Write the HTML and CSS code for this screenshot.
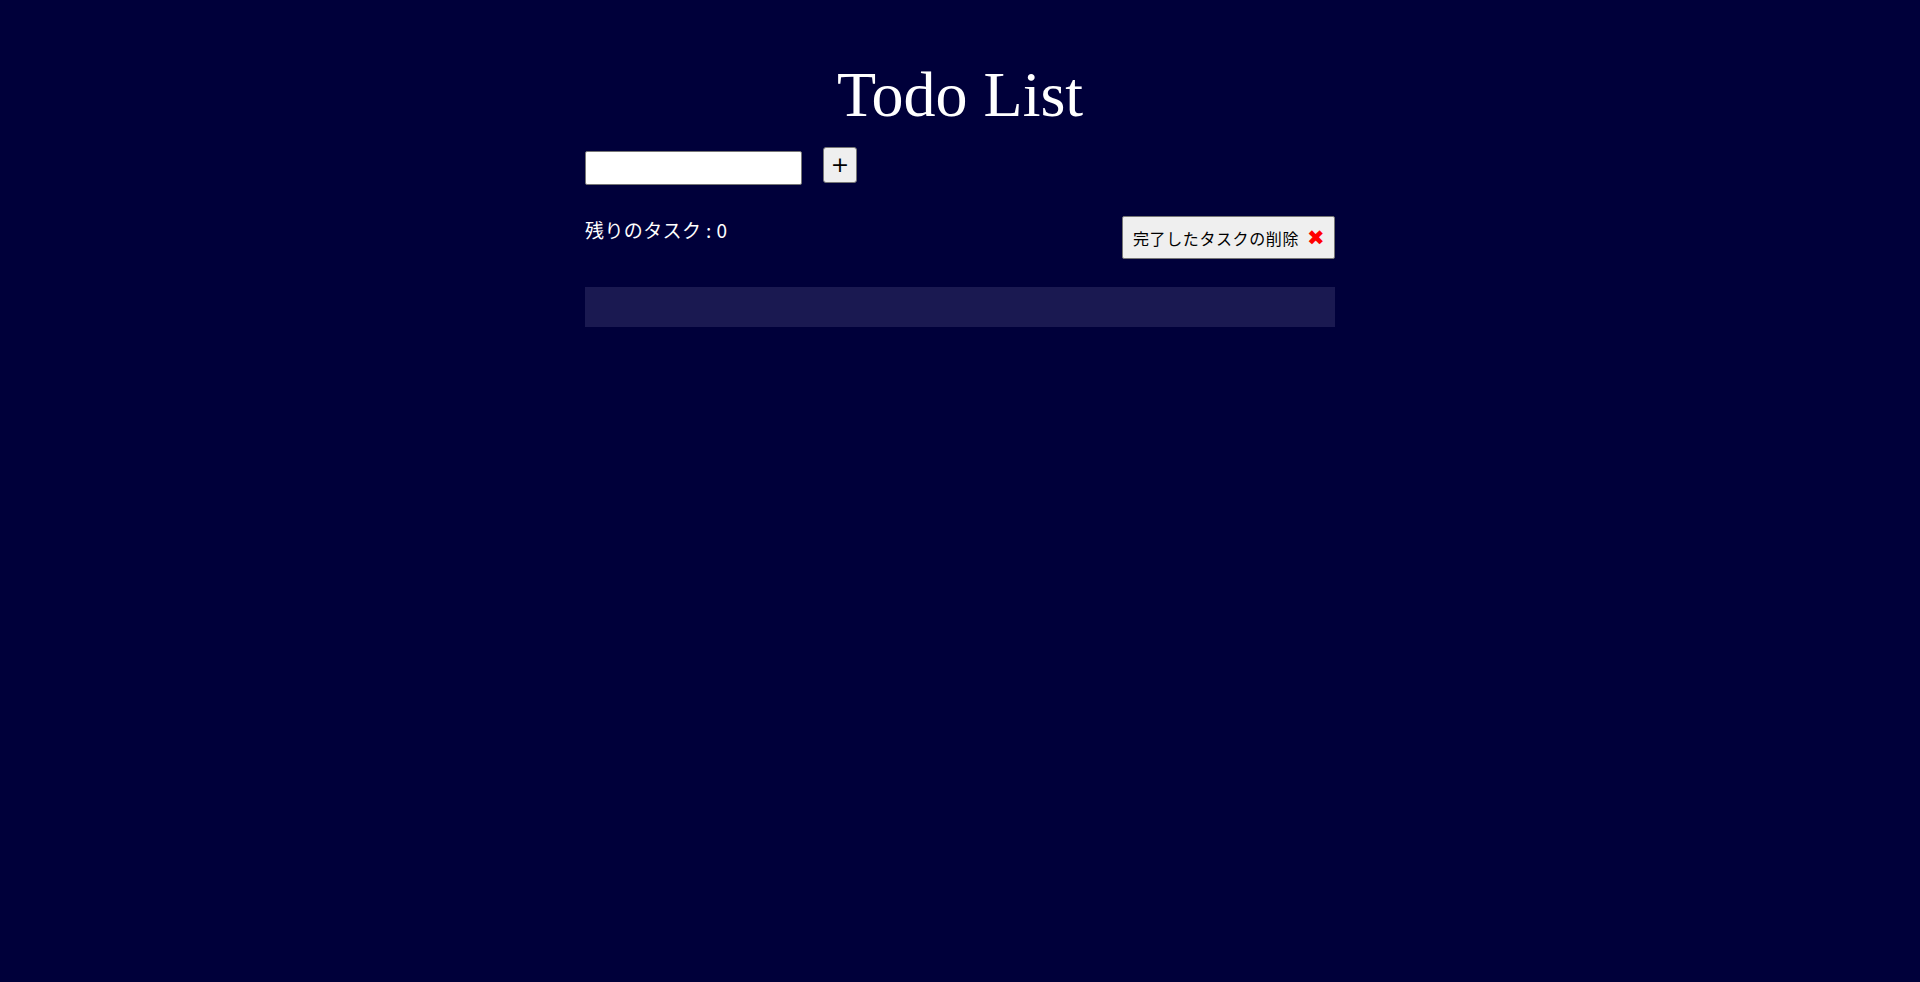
FILE: index.html
```html
<!DOCTYPE html>
<html lang="ja">
<head>
<meta charset="utf-8">
<title>Todo List</title>
<link rel="stylesheet" href="styles.css">
</head>
<body>
<main class="app">
  <h1 class="title">Todo List</h1>
  <form class="add-form">
    <input class="task-input" type="text">
    <button class="add-btn" type="button">+</button>
  </form>
  <div class="status-row">
    <p class="remaining">残りのタスク : 0</p>
    <button class="clear-btn" type="button">完了したタスクの削除<span class="clear-icon">✖</span></button>
  </div>
  <ul class="task-list"></ul>
</main>
</body>
</html>
```
FILE: styles.css
```css
html, body {
  margin: 0;
  padding: 0;
}
body {
  background: #00003a;
  color: #ffffff;
  font-family: "Noto Sans CJK JP", "Noto Sans", sans-serif;
  min-height: 982px;
}
.app {
  width: 750px;
  margin: 0 auto;
  padding-top: 59px;
}
.title {
  margin: 0;
  text-align: center;
  font-family: "Liberation Serif", serif;
  font-weight: normal;
  font-size: 64px;
  line-height: 71px;
  height: 88px;
}
.add-form {
  display: flex;
  align-items: flex-start;
  gap: 21px;
  margin: 0;
}
.task-input {
  box-sizing: border-box;
  width: 217px;
  height: 34px;
  margin: 4px 0 0 0;
  border: 1px solid #767676;
  border-radius: 2px;
  background: #ffffff;
  padding: 0 4px;
}
.add-btn {
  box-sizing: border-box;
  width: 34px;
  height: 36px;
  padding: 0;
  border: 1px solid #767676;
  border-radius: 3px;
  background: #efefef;
  color: #000000;
  font-family: "DejaVu Sans", sans-serif;
  font-size: 22px;
  line-height: 1;
}
.status-row {
  display: flex;
  justify-content: space-between;
  align-items: flex-start;
  margin-top: 31px;
}
.remaining {
  margin: 0;
  font-size: 19px;
  line-height: 27px;
  letter-spacing: 0.4px;
}
.clear-btn {
  box-sizing: border-box;
  display: flex;
  align-items: center;
  height: 43px;
  width: 213px;
  padding: 0 10px;
  border: 1px solid #767676;
  border-radius: 2px;
  background: #efefef;
  color: #000000;
  font-family: "Noto Sans CJK JP", sans-serif;
  font-size: 16px;
  letter-spacing: 0.6px;
  white-space: nowrap;
}
.clear-icon {
  color: #ff0000;
  margin-left: 8px;
  font-family: "DejaVu Sans", sans-serif;
  font-size: 21px;
  letter-spacing: 0;
}
.task-list {
  list-style: none;
  margin: 28px 0 0 0;
  padding: 0;
  height: 40px;
  background: #1a1951;
}
```
